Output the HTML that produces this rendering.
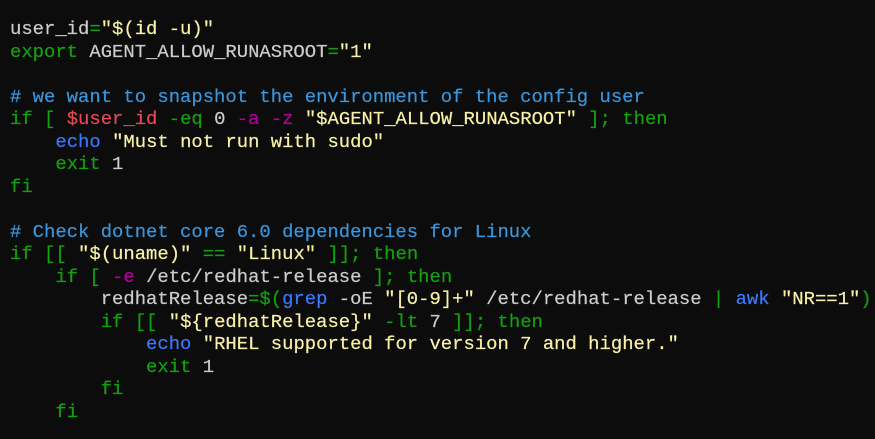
<!DOCTYPE html>
<html><head><style>
html,body{margin:0;padding:0;background:#0c0c0c;width:875px;height:439px;overflow:hidden}
pre{margin:0;position:absolute;left:10px;top:18px;font-family:"Liberation Mono","DejaVu Sans Mono",monospace;font-size:18.9px;line-height:22.52px;color:#cccccc;white-space:pre;-webkit-text-stroke:0.2px}
.g{color:#13a10e}.y{color:#f9f1a5}.c{color:#3a96dd}.b{color:#3b78ff}.r{color:#e74856}.m{color:#b4009e}
</style></head><body><pre>user_id<span class="g">=</span><span class="y">"$(id -u)"</span>
<span class="g">export</span> AGENT_ALLOW_RUNASROOT<span class="g">=</span><span class="y">"1"</span>

<span class="c"># we want to snapshot the environment of the config user</span>
<span class="g">if [</span> <span class="r">$user_id</span> <span class="g">-eq</span> 0 <span class="m">-a</span> <span class="m">-z</span> <span class="y">"$AGENT_ALLOW_RUNASROOT"</span> <span class="g">]; then</span>
    <span class="b">echo</span> <span class="y">"Must not run with sudo"</span>
    <span class="g">exit</span> 1
<span class="g">fi</span>

<span class="c"># Check dotnet core 6.0 dependencies for Linux</span>
<span class="g">if [[</span> <span class="y">"$(uname)"</span> <span class="g">==</span> <span class="y">"Linux"</span> <span class="g">]]; then</span>
    <span class="g">if [</span> <span class="m">-e</span> /etc/redhat-release <span class="g">]; then</span>
        redhatRelease<span class="g">=$(</span><span class="b">grep</span> -oE <span class="y">"[0-9]+"</span> /etc/redhat-release <span class="g">|</span> <span class="b">awk</span> <span class="y">"NR==1"</span><span class="g">)</span>
        <span class="g">if [[</span> <span class="y">"${redhatRelease}"</span> <span class="g">-lt</span> 7 <span class="g">]]; then</span>
            <span class="b">echo</span> <span class="y">"RHEL supported for version 7 and higher."</span>
            <span class="g">exit</span> 1
        <span class="g">fi</span>
    <span class="g">fi</span>
</pre></body></html>
